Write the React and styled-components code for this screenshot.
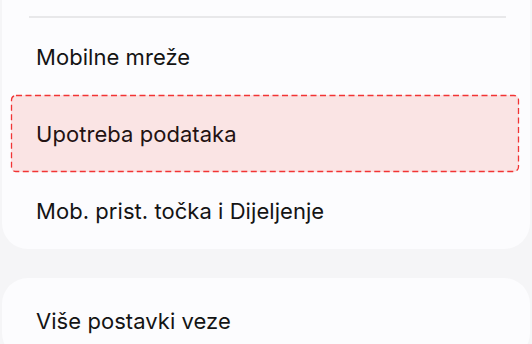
import styled, { createGlobalStyle } from 'styled-components';

const GlobalStyle = createGlobalStyle`
  html, body {
    margin: 0;
    padding: 0;
    background: #f5f5f7;
  }
  body {
    font-family: Inter, "Liberation Sans", sans-serif;
    -webkit-font-smoothing: antialiased;
  }
`;

const Page = styled.div`
  width: 532px;
  height: 344px;
  overflow: hidden;
  padding: 0 2px;
  box-sizing: border-box;
  display: flex;
  flex-direction: column;
  gap: 29px;
`;

const Card = styled.div`
  background: #fcfcfe;
  border-radius: ${(p) => (p.$top ? '0 0 26px 26px' : '26px')};
  padding: ${(p) => (p.$top ? '16px 0 0' : '4px 0 0')};
  display: flex;
  flex-direction: column;
`;

const Divider = styled.div`
  height: 2px;
  margin: 0 24px 0 27px;
  background: #e8e8ea;
`;

const Row = styled.div`
  position: relative;
  height: 77px;
  display: flex;
  align-items: center;
  padding-left: 34px;
  font-size: 22px;
  font-weight: 400;
  letter-spacing: 0.05px;
  color: #141414;
  box-sizing: border-box;
`;

const HighlightRow = styled(Row)`
  margin: 0 11px 0 9px;
  padding-left: 25px;
  background: #fae4e4;
  border-radius: 5px;
  color: #231212;
`;

const DashFrame = styled.svg`
  position: absolute;
  inset: 0;
  width: 100%;
  height: 100%;
  overflow: visible;
  pointer-events: none;
`;

export default function App() {
  return (
    <>
      <GlobalStyle />
      <Page>
        <Card $top>
          <Divider />
          <Row>Mobilne mreže</Row>
          <HighlightRow>
            Upotreba podataka
            <DashFrame>
              <rect
                x="0.5"
                y="0.5"
                width="calc(100% - 1px)"
                height="calc(100% - 1px)"
                rx="4.5"
                fill="none"
                stroke="#f23434"
                strokeWidth="1.3"
                strokeDasharray="6 3.5"
              />
            </DashFrame>
          </HighlightRow>
          <Row>Mob. prist. točka i Dijeljenje</Row>
        </Card>
        <Card>
          <Row>Više postavki veze</Row>
        </Card>
      </Page>
    </>
  );
}
